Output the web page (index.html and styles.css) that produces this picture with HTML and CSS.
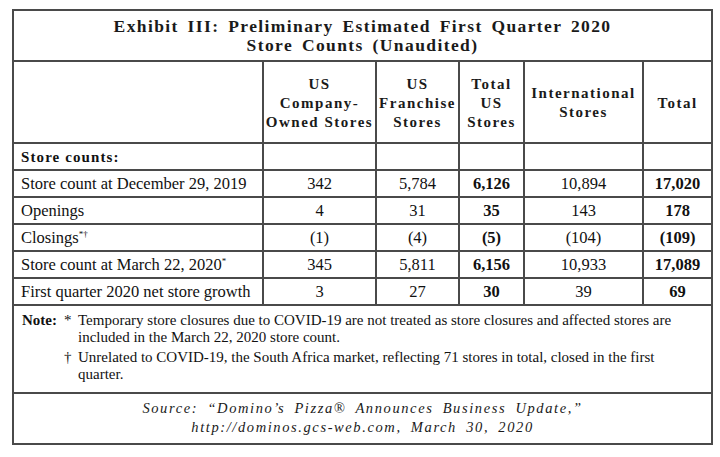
FILE: index.html
```html
<!DOCTYPE html>
<html>
<head>
<meta charset="utf-8">
<link rel="stylesheet" href="styles.css">
</head>
<body>
<table class="exhibit">
  <colgroup>
    <col class="c1"><col class="c2"><col class="c3"><col class="c4"><col class="c5"><col class="c6">
  </colgroup>
  <tr class="title-row">
    <td colspan="6" class="title">Exhibit III: Preliminary Estimated First Quarter 2020<br>Store Counts (Unaudited)</td>
  </tr>
  <tr class="head-row">
    <th></th>
    <th>US<br>Company-<br>Owned Stores</th>
    <th>US<br>Franchise<br>Stores</th>
    <th>Total<br>US<br>Stores</th>
    <th>International<br>Stores</th>
    <th>Total</th>
  </tr>
  <tr class="row">
    <td class="label section">Store counts:</td>
    <td></td><td></td><td></td><td></td><td></td>
  </tr>
  <tr class="row">
    <td class="label">Store count at December 29, 2019</td>
    <td class="num">342</td><td class="num">5,784</td><td class="num b">6,126</td><td class="num">10,894</td><td class="num b">17,020</td>
  </tr>
  <tr class="row">
    <td class="label">Openings</td>
    <td class="num">4</td><td class="num">31</td><td class="num b">35</td><td class="num">143</td><td class="num b">178</td>
  </tr>
  <tr class="row">
    <td class="label">Closings<sup>*†</sup></td>
    <td class="num">(1)</td><td class="num">(4)</td><td class="num b">(5)</td><td class="num">(104)</td><td class="num b">(109)</td>
  </tr>
  <tr class="row">
    <td class="label">Store count at March 22, 2020<sup>*</sup></td>
    <td class="num">345</td><td class="num">5,811</td><td class="num b">6,156</td><td class="num">10,933</td><td class="num b">17,089</td>
  </tr>
  <tr class="row">
    <td class="label">First quarter 2020 net store growth</td>
    <td class="num">3</td><td class="num">27</td><td class="num b">30</td><td class="num">39</td><td class="num b">69</td>
  </tr>
  <tr class="note-row">
    <td colspan="6" class="notes">
      <div class="note">
        <span class="note-lead">Note:</span>
        <span class="mark">*</span>
        <span class="note-text">Temporary store closures due to COVID-19 are not treated as store closures and affected stores are included in the March 22, 2020 store count.</span>
      </div>
      <div class="note">
        <span class="note-lead"></span>
        <span class="mark">†</span>
        <span class="note-text">Unrelated to COVID-19, the South Africa market, reflecting 71 stores in total, closed in the first quarter.</span>
      </div>
    </td>
  </tr>
  <tr class="source-row">
    <td colspan="6" class="source">Source: “Domino’s Pizza® Announces Business Update,”<br>http://dominos.gcs-web.com, March 30, 2020</td>
  </tr>
</table>
</body>
</html>
```
FILE: styles.css
```css
html, body {
  margin: 0;
  padding: 0;
  background: #ffffff;
}
body {
  padding: 9px 0 0 12px;
  font-family: "Liberation Serif", "Times New Roman", serif;
  color: #111;
}
.exhibit {
  border-collapse: collapse;
  width: 701px;
  table-layout: fixed;
  border: 2px solid #4a4a4a;
}
.c1 { width: 250px; }
.c2 { width: 113px; }
.c3 { width: 83px; }
.c4 { width: 65px; }
.c5 { width: 119px; }
.c6 { width: 69px; }
td, th {
  border: 2px solid #4a4a4a;
  padding: 0;
}
.title {
  height: 48px;
  text-align: center;
  font-weight: bold;
  font-size: 17.5px;
  line-height: 19px;
  letter-spacing: 1.4px;
  word-spacing: 3px;
  color: #1a1a1a;
  padding-top: 1px;
}
.head-row th {
  height: 78px;
  font-weight: bold;
  font-size: 15px;
  line-height: 19px;
  letter-spacing: 1.5px;
  text-align: center;
  vertical-align: middle;
  color: #1a1a1a;
  padding-top: 2px;
  white-space: nowrap;
}
.row td {
  height: 25px;
  font-size: 16.5px;
  line-height: 18px;
  vertical-align: middle;
}
.label {
  padding-left: 7px !important;
  white-space: nowrap;
}
.section {
  font-weight: bold;
  font-size: 15px !important;
  letter-spacing: 1.1px;
}
.num { text-align: center; }
.b { font-weight: bold; }
sup {
  font-size: 9px;
  line-height: 0;
  vertical-align: 6px;
}
.notes {
  height: 72px;
  padding: 6px 10px 6px 7px;
  vertical-align: top;
  font-size: 15px;
  line-height: 17px;
}
.note {
  display: flex;
  margin-bottom: 3px;
}
.note-lead {
  flex: 0 0 42px;
  font-weight: bold;
  text-align: left;
  padding-left: 1px;
}
.mark {
  flex: 0 0 14px;
  text-align: left;
}
.note-text { flex: 1; }
.source {
  height: 48px;
  text-align: center;
  font-style: italic;
  font-size: 14.5px;
  line-height: 19px;
  letter-spacing: 1.6px;
  word-spacing: 4px;
  color: #1a1a1a;
  padding-bottom: 1px;
}
```
